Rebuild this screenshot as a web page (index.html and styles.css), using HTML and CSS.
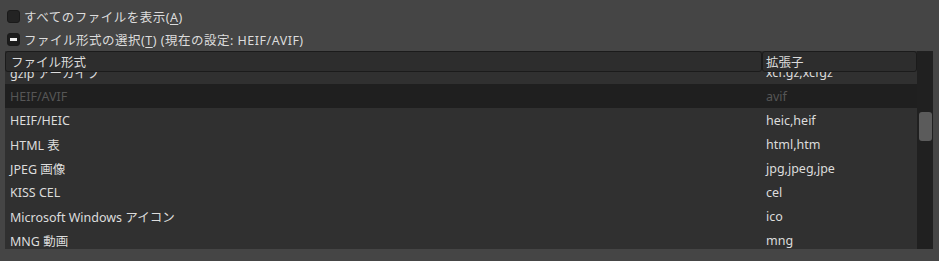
FILE: index.html
```html
<!DOCTYPE html>
<html lang="ja">
<head>
<meta charset="utf-8">
<link rel="stylesheet" href="styles.css">
</head>
<body>
<div class="opts">
  <div class="opt"><span class="cb"></span><span class="lbl">すべてのファイルを表示(<u>A</u>)</span></div>
  <div class="opt"><span class="cb mixed"><span class="dash"></span></span><span class="lbl">ファイル形式の選択(<u>T</u>) (現在の設定: HEIF/AVIF)</span></div>
</div>
<div class="list">
  <div class="main">
    <div class="head">
      <div class="hcell c1">ファイル形式</div>
      <div class="hcell c2">拡張子</div>
    </div>
    <div class="view">
      <div class="rows">
        <div class="row"><div class="cell c1">gzip アーカイブ</div><div class="cell c2">xcf.gz,xcfgz</div></div>
        <div class="row sel"><div class="cell c1">HEIF/AVIF</div><div class="cell c2">avif</div></div>
        <div class="row"><div class="cell c1">HEIF/HEIC</div><div class="cell c2">heic,heif</div></div>
        <div class="row"><div class="cell c1">HTML 表</div><div class="cell c2">html,htm</div></div>
        <div class="row"><div class="cell c1">JPEG 画像</div><div class="cell c2">jpg,jpeg,jpe</div></div>
        <div class="row"><div class="cell c1">KISS CEL</div><div class="cell c2">cel</div></div>
        <div class="row"><div class="cell c1">Microsoft Windows アイコン</div><div class="cell c2">ico</div></div>
        <div class="row"><div class="cell c1">MNG 動画</div><div class="cell c2">mng</div></div>
      </div>
    </div>
  </div>
  <div class="sbar"><div class="thumb"></div></div>
</div>
</body>
</html>
```
FILE: styles.css
```css
html, body { margin: 0; padding: 0; }
body {
  width: 939px;
  height: 261px;
  overflow: hidden;
  background: #454545;
  color: #dcdcdc;
  font-family: "Noto Sans", "Noto Sans CJK JP", sans-serif;
  font-size: 12.5px;
}
.opts { padding-top: 5px; padding-left: 7px; }
.opt { height: 23px; display: flex; align-items: center; gap: 4px; }
.cb {
  width: 13px; height: 13px; box-sizing: border-box;
  border-radius: 3px;
  background: #232323;
  border: 1px solid #1a1a1a;
  display: flex; align-items: center; justify-content: center;
}
.cb.mixed { background: #1c1c1c; }
.dash { width: 7px; height: 3px; background: #f0f0f0; }
.lbl { letter-spacing: 0.5px; }
.lbl u { text-decoration-thickness: 1px; text-underline-offset: 2px; }

.list {
  margin-left: 5px;
  width: 928px;
  height: 198px;
  display: flex;
  background: #303030;
}
.main { width: 912px; display: flex; flex-direction: column; }
.head { height: 21px; display: flex; background: #2d2d2d; }
.hcell {
  box-sizing: border-box;
  height: 21px;
  border: 1px solid #1b1b1b;
  border-radius: 3px;
  background: #2d2d2d;
  display: flex; align-items: center;
}
.hcell.c1 { width: 757px; padding-left: 5px; }
.hcell.c2 { width: 155px; padding-left: 3px; }
.view { flex: 1; overflow: hidden; }
.rows { margin-top: -12px; }
.row { height: 24px; display: flex; align-items: center; }
.row.sel { background: #1f1f1f; color: #565656; }
.cell.c1 { width: 757px; padding-left: 5px; box-sizing: border-box; }
.cell.c2 { width: 155px; padding-left: 4px; box-sizing: border-box; }
.sbar { width: 16px; background: #202020; padding-top: 61px; box-sizing: border-box; }
.thumb { margin-left: 2px; width: 13px; height: 29px; border-radius: 3px; background: #5b5b5b; }
```
